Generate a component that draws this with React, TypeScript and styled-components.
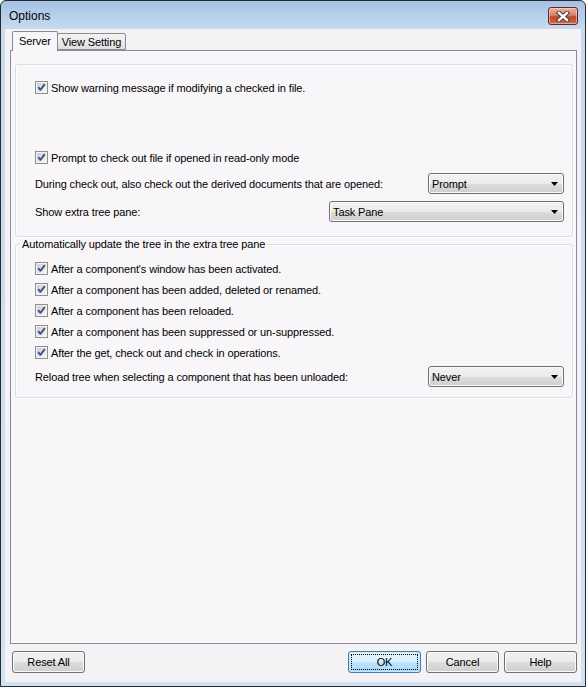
import styled, { createGlobalStyle } from 'styled-components';

const GlobalStyle = createGlobalStyle`
  html, body {
    margin: 0;
    padding: 0;
  }
  body {
    font-family: 'Liberation Sans', Arial, sans-serif;
    font-size: 11px;
    letter-spacing: -0.12px;
    color: #000;
    background: #ffffff;
  }
`;

const Window = styled.div`
  width: 586px;
  height: 687px;
  box-sizing: border-box;
  border: 1px solid #2a2a2a;
  border-radius: 6px 6px 0 0;
  background: linear-gradient(180deg, #a4c1e3 0px, #b6cfeb 14px, #c6daf0 28px, #d1e2f4 100%);
  display: flex;
  flex-direction: column;
  overflow: hidden;
`;

const TitleBar = styled.div`
  height: 28px;
  display: flex;
  align-items: flex-start;
  justify-content: space-between;
  padding: 0 7px 0 8px;
  flex-shrink: 0;
`;

const Title = styled.div`
  font-size: 12px;
  letter-spacing: 0;
  line-height: 14px;
  margin-top: 8px;
  color: #000;
`;

const CloseButton = styled.div`
  width: 30px;
  height: 18px;
  margin-top: 6px;
  box-sizing: border-box;
  border: 1px solid #5e2a20;
  border-radius: 3px;
  background: linear-gradient(180deg, #eab1a2 0%, #d98068 45%, #c24528 55%, #cf6a4c 100%);
  box-shadow: inset 0 0 0 1px rgba(255, 220, 210, 0.55);
  display: flex;
  align-items: center;
  justify-content: center;
`;

const Client = styled.div`
  flex: 1;
  margin: 0 4px 4px 4px;
  background: #f5f2f5;
  display: flex;
  flex-direction: column;
  padding: 0 4px 9px 5px;
`;

const TabRow = styled.div`
  height: 21px;
  display: flex;
  align-items: flex-end;
  padding-left: 2px;
  position: relative;
  z-index: 1;
  flex-shrink: 0;
`;

const Tab = styled.div<{ $active?: boolean }>`
  box-sizing: border-box;
  height: ${(p) => (p.$active ? '20px' : '17px')};
  margin-bottom: ${(p) => (p.$active ? '-1px' : '0')};
  margin-left: ${(p) => (p.$active ? '0' : '-1px')};
  padding: ${(p) => (p.$active ? '3px 6px 0 6px' : '2px 4px 0 4px')};
  border: 1px solid #898c95;
  border-bottom: ${(p) => (p.$active ? 'none' : '1px solid #898c95')};
  border-radius: 2px 2px 0 0;
  background: ${(p) => (p.$active ? '#f8f6f8' : 'linear-gradient(180deg, #f3f3f3 0%, #ebebeb 50%, #dedede 100%)')};
  position: relative;
  z-index: ${(p) => (p.$active ? 2 : 1)};
  line-height: 13px;
  white-space: nowrap;
`;

const Panel = styled.div`
  flex: 1;
  border: 1px solid #898c95;
  background: #f8f6f8;
  padding: 13px 3px 0 4px;
  display: flex;
  flex-direction: column;
`;

const Group = styled.div<{ $mt?: number; $pt: number; $pb: number }>`
  position: relative;
  border: 1px solid #d5dfe5;
  border-radius: 3px;
  box-shadow: inset 1px 1px 0 #ffffff, 1px 1px 0 #ffffff;
  margin-top: ${(p) => p.$mt ?? 0}px;
  display: flex;
  flex-direction: column;
  padding: ${(p) => p.$pt}px 8px ${(p) => p.$pb}px 19px;
`;

const GroupTitle = styled.div`
  position: absolute;
  left: 4px;
  top: -7px;
  padding: 0 2px;
  background: #f8f6f8;
  line-height: 13px;
  white-space: nowrap;
`;

const CheckRow = styled.div<{ $mt?: number }>`
  height: 21px;
  display: flex;
  align-items: center;
  gap: 3px;
  margin-top: ${(p) => p.$mt ?? 0}px;
  white-space: nowrap;
`;

const SelectRow = styled.div<{ $mt?: number }>`
  height: 21px;
  display: flex;
  align-items: center;
  justify-content: space-between;
  margin-top: ${(p) => p.$mt ?? 0}px;
  white-space: nowrap;
`;

const Combo = styled.div<{ $w: number }>`
  width: ${(p) => p.$w}px;
  height: 21px;
  box-sizing: border-box;
  border: 1px solid #707070;
  border-radius: 3px;
  background: linear-gradient(180deg, #f2f2f2 0%, #ebebeb 50%, #dddddd 51%, #cfcfcf 100%);
  box-shadow: inset 0 0 0 1px #fbfbfb;
  display: flex;
  align-items: center;
  justify-content: space-between;
  padding: 0 5px 0 3px;
`;

const ButtonBar = styled.div`
  display: flex;
  align-items: center;
  margin-top: 7px;
  padding-left: 2px;
  gap: 5px;
  height: 22px;
  flex-shrink: 0;
`;

const Spacer = styled.div`
  flex: 1;
`;

const Button = styled.div<{ $default?: boolean }>`
  position: relative;
  width: 73px;
  height: 22px;
  box-sizing: border-box;
  border: 1px solid ${(p) => (p.$default ? '#3c7fb1' : '#707070')};
  border-radius: 3px;
  background: ${(p) =>
    p.$default
      ? 'linear-gradient(180deg, #eaf6fd 0%, #d9f0fc 50%, #bee6fd 51%, #a7d9f5 100%)'
      : 'linear-gradient(180deg, #f2f2f2 0%, #ebebeb 50%, #dddddd 51%, #cfcfcf 100%)'};
  box-shadow: inset 0 0 0 1px ${(p) => (p.$default ? '#c6e8fa' : '#fbfbfb')};
  display: flex;
  align-items: center;
  justify-content: center;
  line-height: 13px;

  ${(p) =>
    p.$default &&
    `
    &::after {
      content: '';
      position: absolute;
      inset: 2px;
      border: 1px dotted #000;
    }
  `}
`;

function CheckBox() {
  return (
    <svg width="13" height="13" viewBox="0 0 13 13" style={{ flexShrink: 0 }}>
      <defs>
        <linearGradient id="cbInner" x1="0" y1="0" x2="1" y2="1">
          <stop offset="0" stopColor="#cbcfd5" />
          <stop offset="1" stopColor="#f6f6f6" />
        </linearGradient>
      </defs>
      <rect x="0.5" y="0.5" width="12" height="12" fill="#f4f4f4" stroke="#8f8f8f" />
      <rect x="2" y="2" width="9" height="9" fill="url(#cbInner)" />
      <path d="M3.2 6.2 L5.4 8.8 L9.8 3.2" stroke="#3c5384" strokeWidth="1.9" fill="none" strokeLinejoin="round" />
    </svg>
  );
}

function Arrow() {
  return (
    <svg width="7" height="4" viewBox="0 0 7 4">
      <polygon points="0,0 7,0 3.5,4" fill="#000" />
    </svg>
  );
}

function CloseGlyph() {
  return (
    <svg width="14" height="11" viewBox="0 0 14 11">
      <path d="M3 2 L11 9 M11 2 L3 9" stroke="#3d3d3d" strokeWidth="4.4" strokeLinecap="square" fill="none" />
      <path d="M3 2 L11 9 M11 2 L3 9" stroke="#ffffff" strokeWidth="2.4" strokeLinecap="square" fill="none" />
    </svg>
  );
}

const updateOptions = [
  "After a component's window has been activated.",
  'After a component has been added, deleted or renamed.',
  'After a component has been reloaded.',
  'After a component has been suppressed or un-suppressed.',
  'After the get, check out and check in operations.',
];

export default function App() {
  return (
    <>
      <GlobalStyle />
      <Window>
        <TitleBar>
          <Title>Options</Title>
          <CloseButton>
            <CloseGlyph />
          </CloseButton>
        </TitleBar>
        <Client>
          <TabRow>
            <Tab $active>Server</Tab>
            <Tab>View Setting</Tab>
          </TabRow>
          <Panel>
            <Group $pt={12} $pb={14}>
              <CheckRow>
                <CheckBox />
                <span>Show warning message if modifying a checked in file.</span>
              </CheckRow>
              <CheckRow $mt={49}>
                <CheckBox />
                <span>Prompt to check out file if opened in read-only mode</span>
              </CheckRow>
              <SelectRow $mt={5}>
                <span>During check out, also check out the derived documents that are opened:</span>
                <Combo $w={136}>
                  <span>Prompt</span>
                  <Arrow />
                </Combo>
              </SelectRow>
              <SelectRow $mt={7}>
                <span>Show extra tree pane:</span>
                <Combo $w={235}>
                  <span>Task Pane</span>
                  <Arrow />
                </Combo>
              </SelectRow>
            </Group>
            <Group $mt={7} $pt={13} $pb={10}>
              <GroupTitle>Automatically update the tree in the extra tree pane</GroupTitle>
              {updateOptions.map((label) => (
                <CheckRow key={label}>
                  <CheckBox />
                  <span>{label}</span>
                </CheckRow>
              ))}
              <SelectRow $mt={3}>
                <span>Reload tree when selecting a component that has been unloaded:</span>
                <Combo $w={136}>
                  <span>Never</span>
                  <Arrow />
                </Combo>
              </SelectRow>
            </Group>
          </Panel>
          <ButtonBar>
            <Button>Reset All</Button>
            <Spacer />
            <Button $default>OK</Button>
            <Button>Cancel</Button>
            <Button>Help</Button>
          </ButtonBar>
        </Client>
      </Window>
    </>
  );
}
